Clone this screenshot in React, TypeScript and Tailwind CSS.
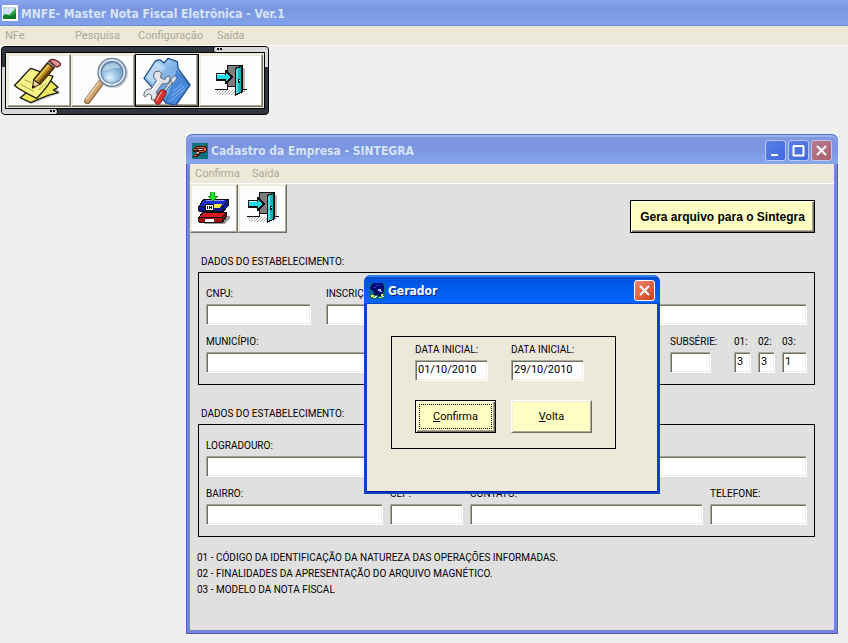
import type { ReactNode } from 'react';

const titleFont = "font-['DejaVu_Sans_Condensed','DejaVu_Sans',sans-serif] text-xs font-bold";
const menuFont = "font-[Roboto,sans-serif] text-[11px] text-[#aca899]";

function DoorIcon() {
  return (
    <svg width="32" height="32" viewBox="0 0 32 32" shapeRendering="crispEdges" aria-hidden="true">
      <path d="M28 3h2v22h-2z" fill="#b8b8b8" />
      <path d="M12 0h15v22H12z" fill="#111" />
      <path d="M13 1h13v20H13z" fill="#7d7d7d" />
      <path d="M0 24h12v-3h1v4H0zM27 24h5v1h-5z" fill="#111" />
      <g stroke="#a8a8a8" strokeDasharray="1 2">
        <path d="M2 25.500H31" />
        <path d="M1 26.500H31" />
        <path d="M3 27.500H30" />
        <path d="M2 28.500H29" />
        <path d="M4 29.500H20" />
      </g>
      <path d="M20 3l8-3v27l-8 4z" fill="#111" />
      <path d="M21 4l5-2v25l-5 2z" fill="#12b5b9" />
      <path d="M21 4l2-1v25l-2 1z" fill="#4adfe3" />
      <path d="M23 14h2v4h-2z" fill="#111" />
      <path d="M24 15h1v1h-1z" fill="#fff" />
      <path d="M1 8h9V5h1l7 7-7 7h-1v-3H1z" fill="#111" />
      <path d="M2 10h9V8l5 4-5 4v-2H2z" fill="#20dfe6" />
      <path d="M2 9h8v1H2z" fill="#b9ffff" />
    </svg>
  );
}

function DrivesIcon() {
  return (
    <svg width="32" height="32" viewBox="0 0 32 32" shapeRendering="crispEdges" aria-hidden="true">
      <path d="M26 24h6v2l-5 6H6v-1h17z" fill="#9a9a9a" />
      <path d="M4 20h24l1 1v3l-4 7H1l-1-1v-4z" fill="#111" />
      <path d="M5 21h22l-3 4H1z" fill="#d81a20" />
      <path d="M1 26h23v4H1z" fill="#a60c12" />
      <path d="M25 25l3-4v3l-3 5z" fill="#7c080c" />
      <path d="M7 27h9v3H7z" fill="#fff" />
      <path d="M5 7h25l1 1v5l-5 7H1l-1-1v-4z" fill="#111" />
      <path d="M6 8h23l-4 6H2z" fill="#1b2fd0" />
      <path d="M8 8h18l-1 1H8z" fill="#8d97e8" />
      <path d="M1 15h24v4H1z" fill="#0a1796" />
      <path d="M26 14l4-5v4l-4 5z" fill="#0d1c9e" />
      <path d="M15 12h9l-2 4h-7z" fill="#f3e93b" />
      <path d="M7 12h9v7H7z" fill="#111" />
      <path d="M8 13h7v5H8z" fill="#fff" />
      <path d="M9 14h1v3H9zM11 14h1v3h-1zM13 14h1v3h-1zM12 15h1v1h-1z" fill="#111" />
      <path d="M12 0h5v4h3l-5 5h-1L9 4h3z" fill="#0a9a16" />
      <path d="M13 0h3v5h2l-3 3h-1l-3-3h2z" fill="#1fe52c" />
    </svg>
  );
}

function NotesIcon() {
  return (
    <svg width="49" height="46" viewBox="39 27 147 138" aria-hidden="true">
      <path d="M70 150l24 14 88-32-20-26z" fill="#c4c4c4" />
      <path d="M60 146l32 15 52-22 30-8-14-8 14-8-34-30z" fill="#eee75a" stroke="#1d1d14" strokeWidth="4" strokeLinejoin="round" />
      <path d="M43 109c16-12 30-34 50-51l66 24c-10 26-28 44-49 66-26-14-48-22-67-39z" fill="#f8f387" stroke="#1d1d14" strokeWidth="4" strokeLinejoin="round" />
      <path d="M62 106l40 22M74 92l20 9M114 124l26-22" stroke="#a9a24a" strokeWidth="3" />
      <path d="M97 118l4-26 19 14z" fill="#f2cf9c" stroke="#3b2610" strokeWidth="3" strokeLinejoin="round" />
      <path d="M97 118l2-10 7 5z" fill="#201408" />
      <path d="M101 92l41-50 20 15-42 49z" fill="#b98a1c" stroke="#3b2610" strokeWidth="4" />
      <path d="M107 94l41-48" stroke="#f3d86a" strokeWidth="4" />
      <path d="M117 102l41-47" stroke="#6b460c" strokeWidth="6" />
      <path d="M142 42l6-7 20 15-6 7z" fill="#8a948e" stroke="#3b2610" strokeWidth="3" />
      <path d="M148 35c10-9 36 3 33 14l-9 5-6-2z" fill="#e8919a" stroke="#6b2530" strokeWidth="4" />
    </svg>
  );
}

function MagnifierIcon() {
  return (
    <svg width="48" height="48" viewBox="255 26 144 144" aria-hidden="true">
      <defs>
        <radialGradient id="lens" cx="0.4" cy="0.75" r="0.8">
          <stop offset="0" stopColor="#dff3fb" />
          <stop offset="0.5" stopColor="#93bfe0" />
          <stop offset="1" stopColor="#5d90c4" />
        </radialGradient>
      </defs>
      <path d="M308 104l-40 54" stroke="#8b6239" strokeWidth="19" strokeLinecap="round" />
      <path d="M307 104l-39 52" stroke="#cfa271" strokeWidth="14" strokeLinecap="round" />
      <path d="M302 104l-36 48" stroke="#ecd0a9" strokeWidth="4" strokeLinecap="round" />
      <circle cx="345" cy="75" r="45" fill="#a9b3c2" opacity="0.5" />
      <circle cx="342" cy="72" r="44" fill="#6c7f9c" />
      <circle cx="342" cy="72" r="40" fill="#dbe3ee" />
      <circle cx="342" cy="72" r="34" fill="#5f789e" />
      <circle cx="342" cy="72" r="31" fill="url(#lens)" />
      <path d="M315 68c4-26 42-34 54-8-20-4-38 2-54 8z" fill="#fff" opacity="0.4" />
    </svg>
  );
}

function ToolsIcon() {
  return (
    <svg width="50" height="48" viewBox="42 28 150 144" aria-hidden="true">
      <defs>
        <linearGradient id="folder" x1="0" y1="0" x2="1" y2="1">
          <stop offset="0" stopColor="#c9e2f8" />
          <stop offset="0.5" stopColor="#6fa9e2" />
          <stop offset="1" stopColor="#2b66bd" />
        </linearGradient>
      </defs>
      <path d="M48 92l34-52 14-4 12 10 12-14 28 10 2 20 36 50-42 60-30-6z" fill="url(#folder)" stroke="#24508f" strokeWidth="4" strokeLinejoin="round" />
      <path d="M112 166l34-96 38 44-42 57z" fill="#4a88d8" stroke="#25539c" strokeWidth="2" />
      <path d="M112 62l34 10-28 78z" fill="#8bbdec" opacity="0.6" />
      <path d="M126 160l46-38M130 146l38-30M136 130l26-20" stroke="#7fb3ee" strokeWidth="3" />
      <path d="M54 88l30-44 30 14-40 50z" fill="#cbe3f9" opacity="0.6" />
      <path
        d="M82 72c-8 8-6 20 4 28l-16 24c-14-2-24 8-22 20l4 4 10-10 9 6-1 12 5 2c12-4 16-14 10-24l18-26c16 4 26-8 22-22l-5-2-10 12-12-6 2-14-5-5c-5 0-10 0-13 1z"
        fill="#dfe2e8"
        stroke="#59616d"
        strokeWidth="3"
        strokeLinejoin="round"
      />
      <path d="M92 98l-20 30" stroke="#fff" strokeWidth="5" />
      <path d="M108 132l24-32" stroke="#59616d" strokeWidth="8" />
      <path d="M108 132l24-32" stroke="#e6e9ee" strokeWidth="4" />
      <path d="M129 102l3-12 12-6 1 10-9 12z" fill="#dfe3ea" stroke="#59616d" strokeWidth="2" />
      <path d="M104 136l-14 24" stroke="#7d1712" strokeWidth="22" strokeLinecap="round" />
      <path d="M104 136l-14 24" stroke="#d6362d" strokeWidth="17" strokeLinecap="round" />
      <path d="M100 133l-14 24" stroke="#f59c92" strokeWidth="4" strokeLinecap="round" />
    </svg>
  );
}

function ChartLogo() {
  return (
    <svg width="16" height="16" viewBox="0 0 16 16" aria-hidden="true">
      <path d="M0 0h16v16H0z" fill="#fff" />
      <path d="M1 2h13v12H1z" fill="#b9d3ea" />
      <path d="M1 5h13M1 8h13M5 2v12M9 2v12" stroke="#e8f2fa" />
      <path d="M1 10l3-1 3 1 3-3 4-4v11H1z" fill="#28a83c" />
      <path d="M1 11l4-1 3 1 6-3v6H1z" fill="#117a2b" />
    </svg>
  );
}

function EmpresaLogo() {
  return (
    <svg width="16" height="16" viewBox="0 0 16 16" shapeRendering="crispEdges" aria-hidden="true">
      <path d="M0 0h16v16H0z" fill="#0b7377" />
      <path d="M1 6l3-3h9l2 2v3l-3 2H9l-4 4H1l4-5H1z" fill="#3a1512" />
      <path d="M4 4h9v1H4zM2 6h3v1H2zM12 5h2v3h-2zM7 8h5v1H7zM4 10h3v1H4zM2 12h3v1H2z" fill="#e2603d" />
      <path d="M6 6h5v1H6zM5 9h2v1H5z" fill="#f3c4ac" />
    </svg>
  );
}

function GeradorLogo() {
  return (
    <svg width="16" height="16" viewBox="0 0 16 16" shapeRendering="crispEdges" aria-hidden="true">
      <path d="M0 0h16v16H0z" fill="#0e6a86" />
      <path d="M2 2l3-2h9l1 3v5l-3 4H7L4 9 1 6z" fill="#05086e" />
      <path d="M6 2h5v1H6zM4 4h3v1H4z" fill="#2430c0" />
      <path d="M9 6h3v2H9zM11 8h2v1h-2z" fill="#b9b9ee" />
      <path d="M5 10h3v2H5zM9 12h3v1H9z" fill="#0a0a2a" />
      <path d="M2 12h3v2H2zM4 14h3v1H4zM12 11h2v2h-2zM10 14h3v1h-3z" fill="#f0ec4a" />
      <path d="M6 13h2v1H6zM13 13h2v1h-2z" fill="#fff" />
    </svg>
  );
}

function ToolButton({ label, focused, className, children }: { label: string; focused?: boolean; className: string; children: ReactNode }) {
  return (
    <button
      aria-label={label}
      className={`flex items-center justify-center bg-[#fdfdfd] border ${className} ${
        focused
          ? 'border-black shadow-[inset_-1px_-1px_0_#716f64,inset_-2px_-2px_0_#aca899]'
          : 'border-t-[#f1efe2] border-l-[#f1efe2] border-r-[#716f64] border-b-[#716f64] shadow-[inset_-1px_-1px_0_#aca899,inset_1px_1px_0_#ece9d8]'
      }`}
    >
      {children}
    </button>
  );
}

function Field({ label, value = '', className }: { label: string; value?: string; className: string }) {
  return (
    <label className={`flex flex-col gap-[2px] font-[Roboto,sans-serif] text-[10px] leading-4 whitespace-nowrap text-black ${className}`}>
      {label}
      <input
        type="text"
        defaultValue={value}
        className="h-[21px] w-full min-w-0 border border-t-[#aca899] border-r-white border-b-white border-l-[#aca899] bg-white px-[2px] pb-[2px] text-[11px] leading-4 text-black shadow-[inset_1px_1px_0_#716f64,inset_-1px_-1px_0_#f1efe2] outline-none"
      />
    </label>
  );
}

function Section({ title, children }: { title: string; children: ReactNode }) {
  return (
    <section className="mt-[21px] mr-[19px] ml-2">
      <h2 className="ml-[3px] text-[10px] leading-4">{title}</h2>
      <div className="mt-[2px] flex flex-col gap-[9px] border border-black px-[7px] pt-[13px] pb-[11px]">{children}</div>
    </section>
  );
}

function MainToolbar() {
  return (
    <div className="ml-px flex w-fit flex-col overflow-hidden rounded-[4px] border border-black bg-[#30363d]">
      <div className="flex h-[5px] justify-end">
        <div className="flex w-[55px] gap-px rounded-l-sm border-l border-black bg-[#d8d8da] pt-px pl-[3px]">
          <span className="size-[2px] bg-black" />
          <span className="size-[2px] bg-black" />
        </div>
      </div>
      <div className="flex">
        <div className="flex w-[3px] flex-col">
          <span className="h-[15px]" />
          <span className="flex-1 bg-[#d8d8da]" />
        </div>
        <div className="flex border border-black bg-[#ece9d8] p-px">
          <ToolButton label="NFe" className="h-[53px] w-16 pr-1"><NotesIcon /></ToolButton>
          <ToolButton label="Pesquisa" className="h-[53px] w-16 pl-2"><MagnifierIcon /></ToolButton>
          <ToolButton label="Configuração" focused className="h-[53px] w-16"><ToolsIcon /></ToolButton>
          <ToolButton label="Saída" className="h-[53px] w-16"><DoorIcon /></ToolButton>
        </div>
        <div className="flex w-[3px] flex-col">
          <span className="h-[15px] bg-[#d8d8da]" />
          <span className="flex-1" />
        </div>
      </div>
      <div className="flex h-[5px]">
        <div className="flex w-[56px] justify-end gap-px rounded-r-sm border-r border-black bg-[#d8d8da] pt-px pr-[2px]">
          <span className="size-[2px] bg-black" />
          <span className="size-[2px] bg-black" />
        </div>
      </div>
    </div>
  );
}

function CaptionButton({ label, className, path }: { label: string; className: string; path: string }) {
  return (
    <button aria-label={label} className={`flex size-[21px] items-center justify-center rounded-[3px] border ${className}`}>
      <svg width="15" height="15" viewBox="0 0 15 15" fill="none" aria-hidden="true">
        <path d={path} stroke="#fff" strokeWidth="2" />
      </svg>
    </button>
  );
}

const closePath = 'M3 3l9 9M12 3l-9 9';

function GeradorDialog() {
  const button = 'h-[33px] w-full bg-[#ffffc4] font-[Roboto,sans-serif] text-[11px] text-black';
  return (
    <div
      role="dialog"
      aria-label="Gerador"
      className="absolute top-[141px] left-1/2 w-[296px] -translate-x-1/2 overflow-hidden rounded-t-[7px] bg-[#0a3fc8]"
    >
      <div className="flex h-[29px] items-center bg-linear-to-b from-[#0a48c8] from-0% via-[#0055e5] via-25% to-[#0264fb] to-90% pt-[2px] pr-[5px] pl-[5px] shadow-[inset_0_2px_0_#2b83f5,inset_0_-1px_0_#0048c8]">
        <GeradorLogo />
        <span className={`ml-[3px] flex-1 pt-px text-white [text-shadow:1px_1px_0_#0a2a80] ${titleFont}`}>Gerador</span>
        <CaptionButton label="Fechar" className="border-white bg-linear-to-br from-[#ec8a6c] to-[#cf3a12]" path={closePath} />
      </div>
      <div className="mx-[3px] mb-[3px] bg-[#ece9d8] pt-8 pb-[42px] pl-6 shadow-[0_1px_0_#0019a0]">
        <form className="grid w-fit grid-cols-[81px_81px] gap-x-[15px] border border-black px-[23px] pt-[5px] pb-[15px]" onSubmit={(e) => e.preventDefault()}>
          <Field label="DATA INICIAL:" value="01/10/2010" className="w-[73px]" />
          <Field label="DATA INICIAL:" value="29/10/2010" className="w-[73px]" />
          <button type="submit" className={`mt-[19px] border border-black p-[3px] shadow-[inset_1px_1px_0_#fff,inset_-1px_-1px_0_#716f64,inset_-2px_-2px_0_#aca899] ${button}`}>
            <span className="flex h-full items-center justify-center border border-dotted border-black pt-[2px]">
              <span><u>C</u>onfirma</span>
            </span>
          </button>
          <button type="button" className={`mt-[19px] border border-t-white border-r-[#716f64] border-b-[#716f64] border-l-white pt-[2px] shadow-[inset_1px_1px_0_#f1efe2,inset_-1px_-1px_0_#aca899] ${button}`}>
            <u>V</u>olta
          </button>
        </form>
      </div>
    </div>
  );
}

function EmpresaWindow() {
  return (
    <div className="relative mt-[19px] mr-[10px] ml-[186px] min-w-[620px] rounded-t-[7px] bg-[#7585dc] pb-[4px] shadow-[inset_1px_-1px_0_#5a5ab8,inset_-1px_0_0_#5a5ab8]">
      <div className="flex h-[30px] items-center gap-[2px] rounded-t-[7px] bg-linear-to-b from-[#7f98e2] from-10% via-[#7a94e0] via-50% to-[#86a4ea] to-90% pt-[3px] pr-[6px] pl-[6px] shadow-[inset_0_1px_0_#5f74c0,inset_0_3px_0_#9ab2ee]">
        <EmpresaLogo />
        <span className={`ml-px flex-1 pt-px text-[#d8e4f8] ${titleFont}`}>Cadastro da Empresa - SINTEGRA</span>
        <CaptionButton label="Minimizar" className="border-[#b4c8f4] bg-linear-to-br from-[#5b80e8] to-[#3f68dc]" path="M3 12h7" />
        <CaptionButton label="Maximizar" className="border-[#b4c8f4] bg-linear-to-br from-[#5b80e8] to-[#3f68dc]" path="M2 3h11M2.500 3v10M12.500 3v10M2 12.500h11" />
        <CaptionButton label="Fechar" className="border-[#c8c4e0] bg-linear-to-br from-[#b87c94] to-[#a8606c]" path={closePath} />
      </div>
      <div className="mx-1 bg-[#e0e0e0] pb-[32px] font-[Roboto,sans-serif] text-black">
        <nav className={`flex h-5 items-center gap-3 border-b border-white bg-[#ece9d8] pt-px pl-[5px] ${menuFont}`}>
          <button>Confirma</button>
          <button>Saída</button>
        </nav>
        <div className="flex items-start justify-between">
          <div className="flex bg-white">
            <ToolButton label="Confirma" className="h-[49px] w-12 pb-[2px]"><DrivesIcon /></ToolButton>
            <ToolButton label="Saída" className="h-[49px] w-[49px] pb-[2px]"><DoorIcon /></ToolButton>
          </div>
          <button className="mt-4 mr-[19px] h-[33px] w-[185px] border border-black bg-[#ffffc4] font-['Liberation_Sans',sans-serif] text-xs font-bold whitespace-nowrap shadow-[inset_1px_1px_0_#fff,inset_-1px_-1px_0_#716f64,inset_-2px_-2px_0_#aca899]">
            Gera arquivo para o Sintegra
          </button>
        </div>
        <Section title="DADOS DO ESTABELECIMENTO:">
          <div className="flex">
            <Field label="CNPJ:" className="mr-[15px] w-[105px]" />
            <Field label="INSCRIÇÃO:" className="flex-1" />
          </div>
          <div className="flex gap-[7px]">
            <Field label="MUNICÍPIO:" className="mr-2 flex-1" />
            <Field label="SUBSÉRIE:" className="mr-4 w-[41px]" />
            <Field label="01:" value="3" className="w-[17px]" />
            <Field label="02:" value="3" className="w-[17px]" />
            <Field label="03:" value="1" className="w-[25px]" />
          </div>
        </Section>
        <Section title="DADOS DO ESTABELECIMENTO:">
          <Field label="LOGRADOURO:" className="w-full" />
          <div className="flex gap-[7px]">
            <Field label="BAIRRO:" className="w-[177px]" />
            <Field label="CEP:" className="w-[73px]" />
            <Field label="CONTATO:" className="flex-1" />
            <Field label="TELEFONE:" className="w-[97px]" />
          </div>
        </Section>
        <div className="mt-[13px] ml-[7px] text-[10px] leading-4">
          <p>01 - CÓDIGO DA IDENTIFICAÇÃO DA NATUREZA DAS OPERAÇÕES INFORMADAS.</p>
          <p>02 - FINALIDADES DA APRESENTAÇÃO DO ARQUIVO MAGNÉTICO.</p>
          <p>03 - MODELO DA NOTA FISCAL</p>
        </div>
      </div>
      <GeradorDialog />
    </div>
  );
}

export default function App() {
  return (
    <div className="min-h-screen bg-[#efefef]">
      <header className="flex h-[26px] items-center bg-linear-to-b from-[#8aa6ec] from-0% via-[#7a96e0] via-30% to-[#80a0ea] to-90% pl-[2px] shadow-[inset_0_-1px_0_#7088d4]">
        <ChartLogo />
        <h1 className={`ml-[3px] pt-[2px] text-[#d8e4f8] ${titleFont}`}>MNFE- Master Nota Fiscal Eletrônica - Ver.1</h1>
      </header>
      <nav className={`flex h-5 items-center border-b border-white bg-[#ece9d8] pt-px pl-[5px] text-left ${menuFont}`}>
        <button className="w-[70px] text-left">NFe</button>
        <button className="w-[63px] text-left">Pesquisa</button>
        <button className="w-[79px] text-left">Configuração</button>
        <button>Saída</button>
      </nav>
      <MainToolbar />
      <EmpresaWindow />
    </div>
  );
}
